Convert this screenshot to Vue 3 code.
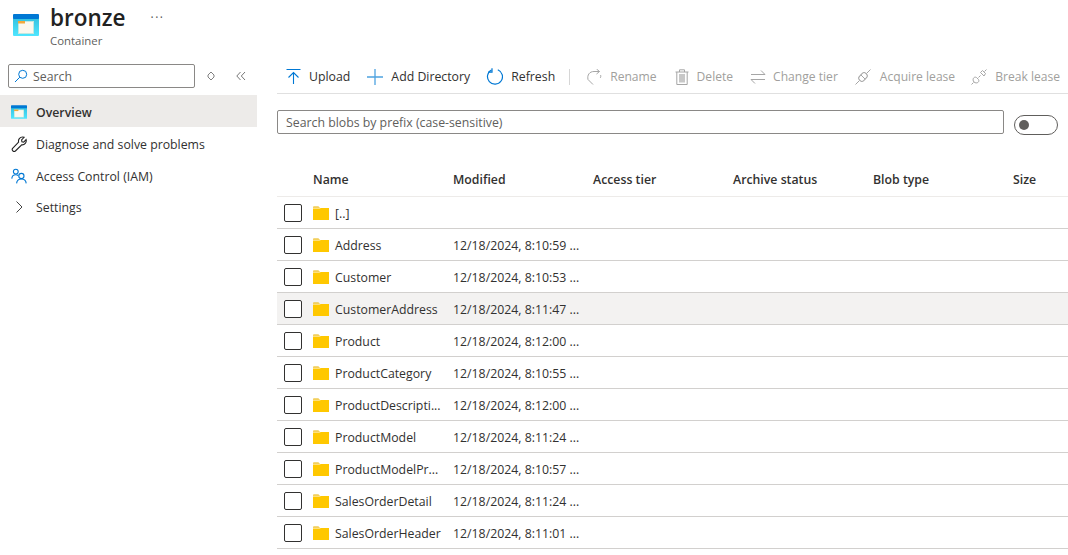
<template>
  <div class="page">
    <header class="head">
      <svg class="head-icon" viewBox="0 0 26 22" width="26" height="22">
        <use href="#box" />
        <defs>
          <linearGradient id="boxbg" x1="0" y1="0" x2="0" y2="1">
            <stop offset="0" stop-color="#32bedd" />
            <stop offset="1" stop-color="#50e6ff" />
          </linearGradient>
          <g id="box">
            <rect x="0" y="2" width="26" height="20" rx="1" fill="url(#boxbg)" />
            <rect x="0" y="0" width="26" height="5" rx="1" fill="#0078d4" />
            <rect x="5" y="7" width="16" height="13" fill="#c3e8df" />
            <rect x="6" y="8" width="14" height="11" fill="#fbf8ee" />
            <rect x="5" y="7" width="7" height="2.500" fill="#f2a93b" />
          </g>
        </defs>
      </svg>
      <div class="head-text">
        <div class="title-line">
          <h1>bronze</h1>
          <span class="more">···</span>
        </div>
        <div class="sub">Container</div>
      </div>
    </header>

    <div class="body">
      <aside class="side">
        <div class="side-search">
          <div class="search-box">
            <svg viewBox="0 0 14 14" width="14" height="14" fill="none" stroke="#0078d4" stroke-width="1">
              <circle cx="8.700" cy="5.300" r="4" />
              <path d="M5.800 8.200 1 13" />
            </svg>
            <span>Search</span>
          </div>
          <svg class="side-tool" viewBox="0 0 10 10" width="10" height="10" fill="none" stroke="#808080" stroke-width="1">
            <path d="M5 1 8 4v2L5 9 2 6V4Z" />
          </svg>
          <svg class="side-tool last" viewBox="0 0 10 10" width="10" height="10" fill="none" stroke="#777" stroke-width="1">
            <path d="M4.500 1 .8 5l3.700 4M9 1 5.300 5 9 9" />
          </svg>
        </div>
        <nav>
          <div class="nav-item active">
            <svg viewBox="0 0 26 22" width="16" height="14"><use href="#box" /></svg>
            <span>Overview</span>
          </div>
          <div class="nav-item">
            <svg viewBox="0 0 16 16" width="16" height="16" fill="none" stroke="#222" stroke-width="1.100">
              <path d="M1.600 12.400 7.600 6.200C7 3.600 8.800 1 11.600 1c.6 0 1 .1 1.500.3L10.600 3.900l.3 1.800 1.800.4 2.400-2.500c.8 2.900-1.500 5.500-4.400 5.200L4.400 15c-.8.7-1.900.6-2.600-.1-.7-.7-.8-1.700-.2-2.500Z" />
            </svg>
            <span>Diagnose and solve problems</span>
          </div>
          <div class="nav-item">
            <svg viewBox="0 0 16 16" width="16" height="16" fill="none" stroke="#0078d4" stroke-width="1.100">
              <circle cx="4.800" cy="3.600" r="2.400" />
              <path d="M.8 10.600c.2-2.400 1.800-3.800 4-3.800 1 0 1.700.2 2.400.7" />
              <circle cx="10.400" cy="8" r="2.600" />
              <path d="M5.600 15.400c.2-2.600 2.200-4.400 4.800-4.400s4.600 1.800 4.800 4.400" />
            </svg>
            <span>Access Control (IAM)</span>
          </div>
          <div class="nav-item">
            <svg viewBox="0 0 16 16" width="16" height="16" fill="none" stroke="#444" stroke-width="1">
              <path d="M5.500 2.500 11 8l-5.500 5.500" />
            </svg>
            <span>Settings</span>
          </div>
        </nav>
      </aside>

      <main class="main">
        <div class="toolbar">
          <button class="tool upload">
            <svg viewBox="0 0 15 17" width="15" height="17" fill="none" stroke="#0078d4" stroke-width="1.100">
              <path d="M.5 1.500h14M7.500 16V4.500M2.500 9.500l5-5 5 5" />
            </svg>
            <span>Upload</span>
          </button>
          <button class="tool">
            <svg viewBox="0 0 16 16" width="16" height="16" fill="none" stroke="#4ea3e0" stroke-width="1.300">
              <path d="M8 0v16M0 8h16" />
            </svg>
            <span>Add Directory</span>
          </button>
          <button class="tool">
            <svg viewBox="0 0 17 17" width="17" height="17" fill="none" stroke="#0078d4" stroke-width="1.200">
              <path d="M5.500 2a7.500 7.500 0 1 0 6.300-.3" />
              <path d="M6 .3v3.900H2.200" />
            </svg>
            <span>Refresh</span>
          </button>
          <i class="sep"></i>
          <button class="tool off pad">
            <svg viewBox="0 0 16 16" width="16" height="16" fill="none" stroke="#a6a6a6" stroke-width="1">
              <path d="M6 15.500 1 10.500C0 6 2.500 2.500 7 2.500h5.500" />
              <path d="M9.500 0l3 2.500-3 2.500M13.500 6c.5 1 .3 2-.3 3" />
            </svg>
            <span>Rename</span>
          </button>
          <button class="tool off pad">
            <svg viewBox="0 0 16 16" width="16" height="16" fill="none" stroke="#a6a6a6" stroke-width="1">
              <path d="M1.500 3h13M5.500 3V.8h5V3M2.800 3v12.500h10.400V3" />
              <rect x="5" y="5" width="6" height="8.500" fill="#c8c8c8" stroke="none" />
            </svg>
            <span>Delete</span>
          </button>
          <button class="tool off pad">
            <svg viewBox="0 0 16 16" width="16" height="16" fill="none" stroke="#a6a6a6" stroke-width="1">
              <path d="M1 5.500h14M11 1.500l4 4M1 10.500h14M5 14.500l-4-4" />
            </svg>
            <span>Change tier</span>
          </button>
          <button class="tool off acquire">
            <svg viewBox="0 0 16 16" width="16" height="16" fill="none" stroke="#a6a6a6" stroke-width="1">
              <path d="M.5 15.500 4.500 11.500M11.500 4.500l4-4" />
              <rect x="3.500" y="5" width="9" height="6" rx="2.500" transform="rotate(-45 8 8)" />
              <path d="M5.800 5.800 10.200 10.200" />
            </svg>
            <span>Acquire lease</span>
          </button>
          <button class="tool off break">
            <svg viewBox="0 0 16 16" width="16" height="16" fill="none" stroke="#a6a6a6" stroke-width="1">
              <path d="M.5 15.500 2.500 13.500M13.500 2.500l2-2M7.500 8.500l2-2" />
              <path d="M9.500 3.500 13 7l1.500-2.500L11.500 1.500Z" />
              <path d="M2.800 8.800c-1 1-1 3 .2 4.200s3.200 1.200 4.200.2c.8-.8.8-1.800.3-2.700L5.500 8.500c-.9-.5-1.900-.5-2.700.3Z" />
            </svg>
            <span>Break lease</span>
          </button>
        </div>

        <div class="filter">
          <div class="filter-box">Search blobs by prefix (case-sensitive)</div>
          <div class="toggle"><i></i></div>
        </div>

        <div class="grid">
          <div class="row head-row">
            <div class="check-col"></div>
            <div v-for="col in columns" :key="col" class="col">{{ col }}</div>
          </div>
          <div v-for="row in rows" :key="row.name" class="row" :class="{ hover: row.name === 'CustomerAddress' }">
            <div class="check-col"><i class="check"></i></div>
            <div class="col name">
              <svg viewBox="0 0 16 14" width="16" height="14">
                <path d="M0 1.500C0 .7.400.4 1 .4h4.500l2 2H0Z" fill="#e8b100" />
                <rect x="0" y="1.500" width="7" height="1.200" fill="#fff0b8" />
                <path d="M0 2.700h6.500l1.300-.8H16V14H0Z" fill="#ffc800" />
              </svg>
              <span>{{ row.name }}</span>
            </div>
            <div class="col">{{ row.modified }}</div>
          </div>
        </div>
      </main>
    </div>
  </div>
</template>

<script setup>
const columns = ['Name', 'Modified', 'Access tier', 'Archive status', 'Blob type', 'Size']

const rows = [
  { name: '[..]', modified: '' },
  { name: 'Address', modified: '12/18/2024, 8:10:59 ...' },
  { name: 'Customer', modified: '12/18/2024, 8:10:53 ...' },
  { name: 'CustomerAddress', modified: '12/18/2024, 8:11:47 ...' },
  { name: 'Product', modified: '12/18/2024, 8:12:00 ...' },
  { name: 'ProductCategory', modified: '12/18/2024, 8:10:55 ...' },
  { name: 'ProductDescripti...', modified: '12/18/2024, 8:12:00 ...' },
  { name: 'ProductModel', modified: '12/18/2024, 8:11:24 ...' },
  { name: 'ProductModelPr...', modified: '12/18/2024, 8:10:57 ...' },
  { name: 'SalesOrderDetail', modified: '12/18/2024, 8:11:24 ...' },
  { name: 'SalesOrderHeader', modified: '12/18/2024, 8:11:01 ...' }
]
</script>

<style>
html, body { margin: 0; overflow: hidden; background: #fff; }
</style>

<style scoped>
.page { width: 1068px; height: 555px; overflow: hidden; font-family: "Open Sans", "Noto Sans", sans-serif; font-size: 12.3px; color: #323130; }
.head { display: flex; height: 60px; padding-left: 13px; box-sizing: border-box; }
.head-icon { margin-top: 14px; }
.head-text { margin-left: 11px; }
.title-line { display: flex; height: 34px; }
h1 { margin: 0; font-size: 22.5px; font-weight: 600; line-height: 35px; color: #222; }
.more { margin-left: 25px; line-height: 35px; font-size: 12px; letter-spacing: 1.500px; color: #555; }
.sub { font-size: 11.400px; line-height: 14px; color: #605e5c; }
.body { display: flex; }
.side { width: 257px; flex: none; }
.side-search { display: flex; align-items: center; height: 24px; margin: 4px 0 7px; padding-left: 8px; }
.search-box { display: flex; align-items: center; gap: 5px; width: 187px; height: 24px; box-sizing: border-box; padding-left: 5px; border: 1px solid #8a8886; border-radius: 2px; color: #605e5c; }
.side-tool { margin-left: 11px; }
.side-tool.last { margin-left: 20px; }
.nav-item { display: flex; align-items: center; gap: 9px; height: 32px; box-sizing: border-box; padding: 2px 0 0 11px; }
.nav-item:last-child { padding-top: 0; }
.nav-item.active { background: #edebe9; font-weight: 600; }
.main { flex: 1; padding-left: 20px; }
.toolbar { display: flex; align-items: center; height: 33px; gap: 16px; padding-left: 9px; border-bottom: 1px solid #e0e0e0; }
.tool { display: flex; align-items: center; gap: 8px; padding: 0; border: 0; background: none; font: inherit; color: #323130; white-space: nowrap; }
.upload { margin-right: 1px; }
.tool.off { color: #a19f9d; font-size: 12.100px; gap: 7px; }
.tool.off.acquire { gap: 9px; }
.tool.off.break { gap: 8px; }
.pad { margin-right: 1px; }
.sep { width: 1px; height: 16px; background: #d6d6d6; margin: 0 1px 0 -2px; }
.filter { display: flex; align-items: center; gap: 10px; margin-top: 16px; height: 24px; }
.filter-box { width: 727px; height: 24px; box-sizing: border-box; border: 1px solid #8a8886; border-radius: 2px; padding-left: 8px; line-height: 24px; color: #605e5c; }
.toggle { width: 44px; height: 20px; margin-top: 5px; box-sizing: border-box; border: 1px solid #605e5c; border-radius: 10px; display: flex; align-items: center; padding-left: 4px; }
.toggle i { width: 10px; height: 10px; border-radius: 50%; background: #605e5c; }
.grid { margin-top: 29px; }
.row { display: flex; align-items: center; height: 32px; box-sizing: border-box; border-bottom: 1px solid #d2d0ce; }
.head-row { height: 34px; border-bottom-color: #edebe9; font-weight: 600; }
.row.hover { background: #f3f2f1; }
.check-col { width: 36px; padding-left: 7px; box-sizing: border-box; display: flex; }
.check { width: 18px; height: 18px; box-sizing: border-box; border: 1px solid #323130; border-radius: 2px; background: #fff; }
.col { width: 140px; flex: none; white-space: nowrap; padding-top: 2px; }
.head-row .col { padding-top: 0; }
.name { display: flex; align-items: center; gap: 6px; }
.name svg { margin-top: -2px; }
</style>
